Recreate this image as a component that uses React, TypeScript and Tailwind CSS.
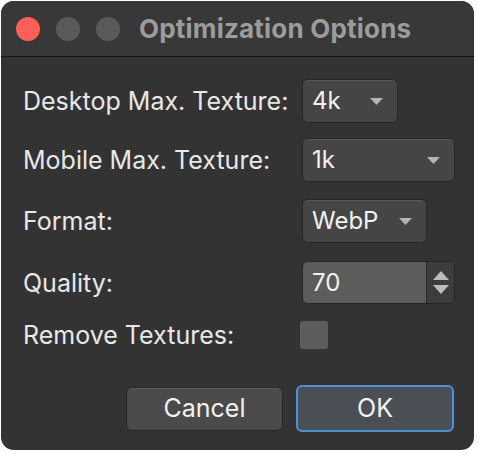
import React from 'react';

const FONT = { fontFamily: 'Inter, "Noto Sans", "Liberation Sans", sans-serif' };

/* small drop-down arrow used by the popup buttons */
function Caret() {
  return (
    <svg width="15" height="9" viewBox="0 0 15 9" className="shrink-0">
      <path d="M1 1 L14 1 L7.5 8 Z" fill="#b4b4b4" />
    </svg>
  );
}

function Popup({ value, width }: { value: string; width: string }) {
  return (
    <div
      className={`${width} h-[44px] flex items-center justify-between pl-[9px] pr-[13px] rounded-[6px] bg-[#454545] border border-[#262626] shadow-[inset_0_1px_0_#5a5a5a] text-[24px] text-[#f2f2f2]`}
    >
      <span>{value}</span>
      <Caret />
    </div>
  );
}

function Row({ label, children, className = '' }: { label: string; children: React.ReactNode; className?: string }) {
  return (
    <div className={`flex items-center ${className}`}>
      <div className="w-[279px] shrink-0 text-[25px] leading-[34px] text-[#e8e8e8]">{label}</div>
      {children}
    </div>
  );
}

export default function App() {
  return (
    <div className="w-[478px] h-[454px] bg-white p-px" style={FONT}>
      <div className="w-[473px] h-[449px] rounded-[13px] overflow-hidden flex flex-col bg-[#333333]">
        {/* ── Title bar ── */}
        <div className="h-[56px] flex items-center bg-[#383838] border-b border-[#141414] shrink-0">
          <div className="flex items-center gap-[16px] pl-[15px]">
            <span className="w-[24px] h-[24px] rounded-full bg-[#fe5f57]" />
            <span className="w-[24px] h-[24px] rounded-full bg-[#5a5a5a]" />
            <span className="w-[24px] h-[24px] rounded-full bg-[#5a5a5a]" />
          </div>
          <div className="ml-[19px] text-[26px] font-bold text-[#9c9c9c] tracking-[0.2px]">Optimization Options</div>
        </div>

        {/* ── Body ── */}
        <div className="flex flex-col pl-[22px] pt-[22px]">
          <Row label="Desktop Max. Texture:">
            <Popup value="4k" width="w-[96px]" />
          </Row>
          <Row label="Mobile Max. Texture:" className="mt-[15px]">
            <Popup value="1k" width="w-[153px]" />
          </Row>
          <Row label="Format:" className="mt-[17px]">
            <Popup value="WebP" width="w-[125px]" />
          </Row>
          <Row label="Quality:" className="mt-[18px]">
            <div className="w-[153px] h-[43px] flex rounded-[6px] border border-[#262626] overflow-hidden">
              <div className="flex-1 flex items-center pl-[9px] bg-[#5c5c5c] text-[24px] text-[#f2f2f2]">70</div>
              <div className="w-[28px] flex flex-col items-center justify-center gap-[5px] bg-[#3c3c3c] border-l border-[#2a2a2a]">
                <svg width="16" height="9" viewBox="0 0 16 9"><path d="M8 0 L16 9 L0 9 Z" fill="#bdbdbd" /></svg>
                <svg width="16" height="9" viewBox="0 0 16 9"><path d="M0 0 L16 0 L8 9 Z" fill="#bdbdbd" /></svg>
              </div>
            </div>
          </Row>
          <Row label="Remove Textures:" className="mt-[14px]">
            <div className="w-[28px] h-[28px] -ml-[2px] rounded-[3px] bg-[#5d5d5d]" />
          </Row>

          {/* ── Buttons ── */}
          <div className="flex mt-[33px] pl-[103px] gap-[13px] items-center">
            <button className="w-[157px] h-[44px] rounded-[6px] bg-[#4a4a4a] border border-[#262626] shadow-[inset_0_1px_0_#5e5e5e] text-[25px] text-[#f2f2f2]">
              Cancel
            </button>
            <button className="w-[158px] h-[47px] rounded-[6px] bg-[#4a4f56] border-2 border-[#4e8fd8] text-[25px] text-[#f2f2f2]">
              OK
            </button>
          </div>
        </div>
      </div>
    </div>
  );
}
